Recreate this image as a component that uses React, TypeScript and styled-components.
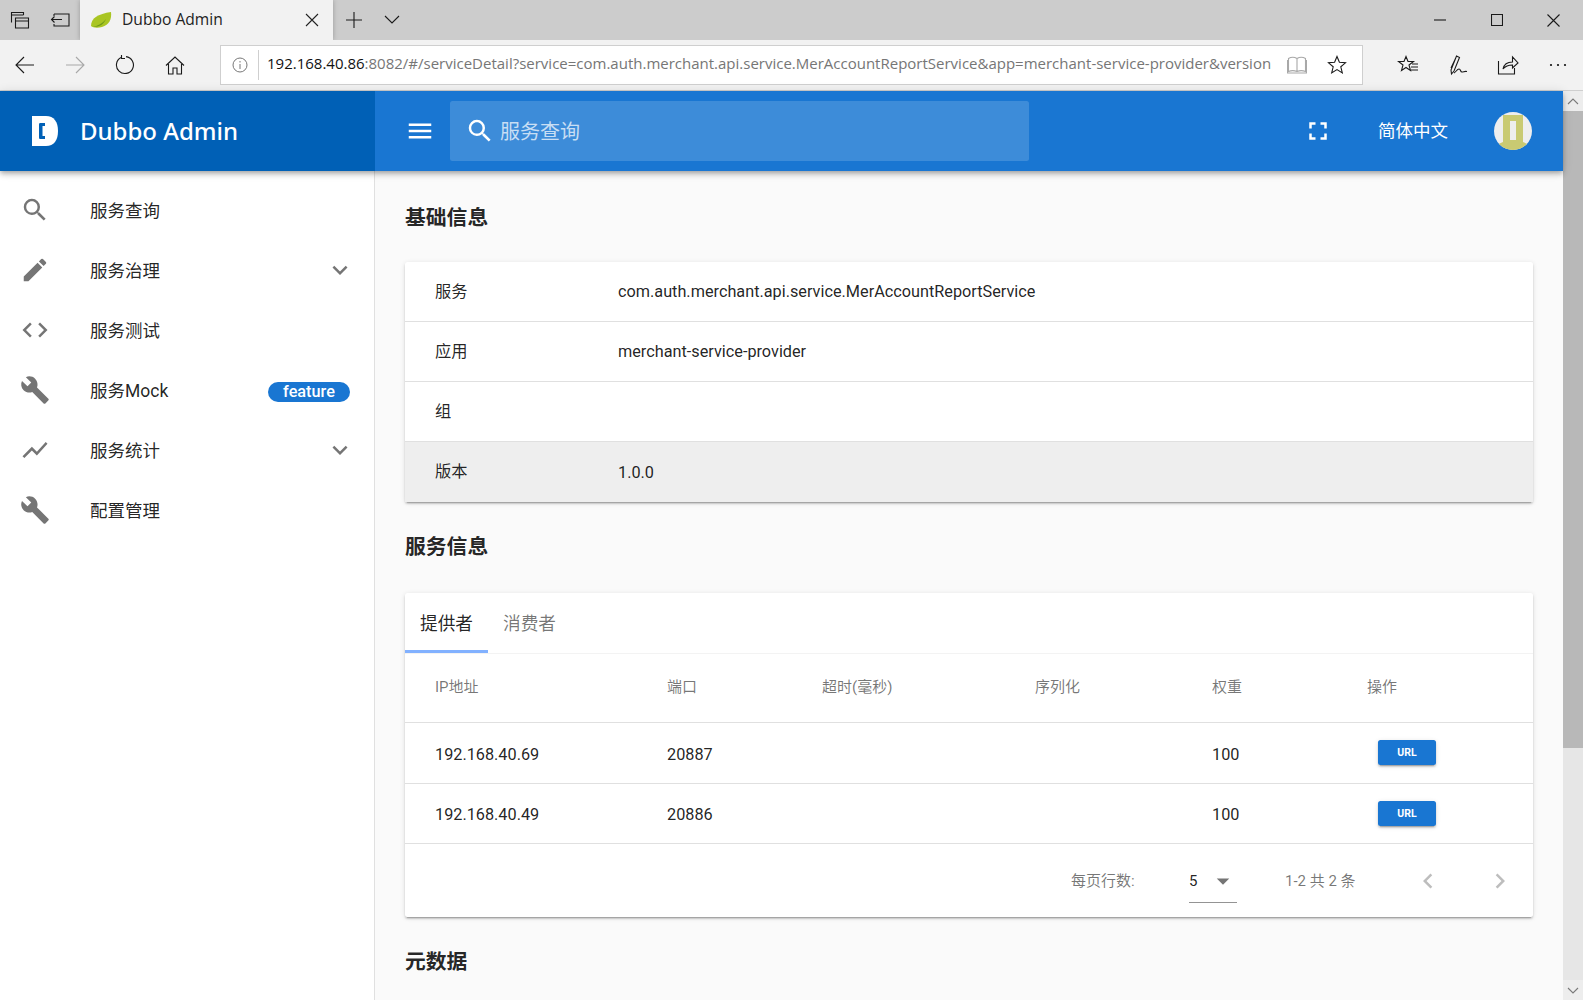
import styled, { createGlobalStyle } from 'styled-components';
import {
  MdArrowDropDown,
  MdBuild,
  MdChevronLeft,
  MdChevronRight,
  MdCode,
  MdEdit,
  MdFullscreen,
  MdKeyboardArrowDown,
  MdMenu,
  MdSearch,
  MdShowChart,
} from 'react-icons/md';

const GlobalStyle = createGlobalStyle`
  html, body {
    margin: 0;
    height: 100%;
    overflow: hidden;
  }
  body {
    font-family: Roboto, "Noto Sans CJK SC", sans-serif;
    color: rgba(0, 0, 0, 0.87);
  }
  * {
    box-sizing: border-box;
  }
`;

const Page = styled.div`
  width: 1583px;
  height: 1000px;
  display: flex;
  flex-direction: column;
  overflow: hidden;
`;

/* browser chrome */
const TabStrip = styled.div`
  height: 40px;
  flex: none;
  display: flex;
  align-items: center;
  background: #cccccc;
`;

const ChromeButton = styled.div<{ $w?: number; $muted?: boolean }>`
  width: ${(p) => p.$w ?? 40}px;
  height: 100%;
  flex: none;
  display: flex;
  align-items: center;
  justify-content: center;
  color: ${(p) => (p.$muted ? '#a8a8a8' : '#1a1a1a')};

  svg {
    fill: none;
    stroke: currentColor;
    stroke-width: 1.1;
  }
`;

const BrowserTab = styled.div`
  width: 253px;
  height: 40px;
  flex: none;
  display: flex;
  align-items: center;
  padding: 0 14px 0 10px;
  background: #f2f2f2;
  box-shadow: 0 0 5px rgba(0, 0, 0, 0.25);
  font-family: "Open Sans", sans-serif;
  font-size: 15.6px;
  color: #222;
`;

const TabTitle = styled.span`
  margin-left: 10px;
  padding-bottom: 2px;
  flex: 1;
`;

const TabTools = styled.div`
  display: flex;
  height: 100%;
  margin-left: 1px;
`;

const WindowControls = styled.div`
  display: flex;
  height: 100%;
  margin-left: auto;
  padding-right: 1px;
`;

const AddressBar = styled.div`
  height: 51px;
  flex: none;
  display: flex;
  align-items: center;
  background: #f2f2f2;
  border-bottom: 1px solid #cfcfcf;
`;

const NavButtons = styled.div`
  width: 220px;
  height: 100%;
  flex: none;
  display: flex;
`;

const UrlBox = styled.div`
  width: 1143px;
  height: 40px;
  flex: none;
  display: flex;
  align-items: center;
  padding-right: 5px;
  background: #fff;
  border: 1px solid #cfcfcf;
  font-family: "Open Sans", sans-serif;
  font-size: 15px;
`;

const UrlInfo = styled.div`
  width: 38px;
  height: 30px;
  flex: none;
  display: flex;
  align-items: center;
  justify-content: center;
  border-right: 1px solid #cfcfcf;
  color: #777;

  svg {
    fill: none;
    stroke: currentColor;
    stroke-width: 1;
  }
`;

const UrlText = styled.div`
  flex: 1;
  margin-left: 8px;
  padding-bottom: 5px;
  white-space: nowrap;
  overflow: hidden;
  color: #767676;

  b {
    font-weight: 400;
    color: #111;
  }
`;

const UrlAction = styled(ChromeButton)`
  width: 40px;
`;

const BrowserActions = styled.div`
  display: flex;
  flex: 1;
  height: 100%;
  padding-left: 20px;
`;

/* app */
const AppFrame = styled.div`
  flex: 1;
  min-height: 0;
  display: flex;
`;

const AppColumn = styled.div`
  flex: 1;
  min-width: 0;
  display: flex;
  flex-direction: column;
`;

const Toolbar = styled.header`
  position: relative;
  z-index: 2;
  height: 80px;
  flex: none;
  display: flex;
  align-items: center;
  background: #1976d2;
  color: #fff;
  box-shadow: 0 2px 4px -1px rgba(0, 0, 0, 0.2), 0 4px 5px 0 rgba(0, 0, 0, 0.14),
    0 1px 10px 0 rgba(0, 0, 0, 0.12);
`;

const Brand = styled.div`
  width: 375px;
  height: 100%;
  flex: none;
  display: flex;
  align-items: center;
  padding-left: 32px;
  background: #0060b6;
  font-family: "Noto Sans", sans-serif;
  font-size: 24px;
  font-weight: 500;
`;

const BrandName = styled.span`
  margin-left: 22px;
  padding-bottom: 1px;
`;

const MenuIcon = styled(MdMenu)`
  width: 30px;
  height: 30px;
  margin-left: 30px;
  flex: none;
`;

const SearchBox = styled.div`
  width: 579px;
  height: 60px;
  margin-left: 15px;
  display: flex;
  align-items: center;
  padding-left: 15px;
  border-radius: 2.5px;
  background: rgba(255, 255, 255, 0.16);
  font-size: 20px;
  color: rgba(255, 255, 255, 0.72);
`;

const SearchIcon = styled(MdSearch)`
  width: 30px;
  height: 30px;
  color: #fff;
  margin-right: 5px;
`;

const SearchHint = styled.span`
  padding-bottom: 2px;
`;

const FullscreenIcon = styled(MdFullscreen)`
  width: 30px;
  height: 30px;
  margin-left: 274px;
  flex: none;
`;

const Language = styled.span`
  margin-left: 45px;
  padding-bottom: 4px;
  font-size: 17.5px;
`;

const Avatar = styled.div`
  width: 38px;
  height: 38px;
  margin-left: 46px;
  flex: none;
  border-radius: 50%;
  overflow: hidden;
`;

const Body = styled.div`
  flex: 1;
  min-height: 0;
  display: flex;
`;

const Sidebar = styled.nav`
  width: 375px;
  flex: none;
  padding-top: 9px;
  background: #fff;
  border-right: 1px solid #e0e0e0;
`;

const NavItem = styled.div`
  height: 60px;
  display: flex;
  align-items: center;
  padding: 0 24px 0 20px;
  font-size: 17.5px;
  color: rgba(0, 0, 0, 0.87);

  > svg:first-child {
    width: 30px;
    height: 30px;
    flex: none;
    color: #757575;
  }
`;

const NavLabel = styled.span`
  margin-left: 40px;
  padding-bottom: 2px;
  flex: 1;
`;

const NavArrow = styled(MdKeyboardArrowDown)`
  width: 30px;
  height: 30px;
  margin-right: -5px;
  color: #757575;
`;

const Pill = styled.span`
  width: 82px;
  height: 20px;
  margin-top: 3px;
  display: flex;
  align-items: center;
  justify-content: center;
  border-radius: 10px;
  background: #1976d2;
  color: #fff;
  font-size: 16.25px;
  font-weight: 500;
`;

const Content = styled.main`
  flex: 1;
  min-width: 0;
  overflow: hidden;
  padding: 0 30px;
  background: #fafafa;
`;

const SectionTitle = styled.h2`
  margin: 30px 0 31px;
  height: 30px;
  line-height: 30px;
  font-size: 20.8px;
  font-weight: 700;
  color: rgba(0, 0, 0, 0.87);

  &:first-child {
    margin: 32px 0 29px;
  }
`;

const Card = styled.section`
  background: #fff;
  border-radius: 2.5px;
  box-shadow: 0 3px 1px -2px rgba(0, 0, 0, 0.2), 0 2px 2px 0 rgba(0, 0, 0, 0.14),
    0 1px 5px 0 rgba(0, 0, 0, 0.12);
`;

const InfoRow = styled.div<{ $active?: boolean }>`
  height: 60px;
  display: flex;
  align-items: center;
  padding-left: 30px;
  font-size: 16.25px;
  background: ${(p) => (p.$active ? '#eeeeee' : 'transparent')};
  border-top: 1px solid #e0e0e0;

  &:first-child {
    height: 59px;
    border-top: 0;
  }

  &:last-child {
    height: 61px;
  }
`;

const InfoKey = styled.span`
  width: 183px;
  flex: none;
  padding-bottom: 4px;
`;

const Tabs = styled.div`
  height: 60px;
  display: flex;
  box-shadow: 0 1px 0 #f3f3f3;
`;

const Tab = styled.div<{ $active?: boolean }>`
  width: 83px;
  display: flex;
  align-items: center;
  justify-content: center;
  font-size: 17.7px;
  color: ${(p) => (p.$active ? 'rgba(0, 0, 0, 0.87)' : 'rgba(0, 0, 0, 0.54)')};
  border-bottom: 3px solid ${(p) => (p.$active ? '#82b1ff' : 'transparent')};
`;

const GridRow = styled.div`
  display: grid;
  grid-template-columns: 232px 155px 213px 177px 155px 1fr;
  align-items: center;
  padding-left: 30px;
`;

const HeadRow = styled(GridRow)`
  height: 69px;
  padding-bottom: 5px;
  font-size: 15px;
  color: rgba(0, 0, 0, 0.54);
`;

const BodyRow = styled(GridRow)<{ $tall?: boolean }>`
  height: ${(p) => (p.$tall ? 61 : 60)}px;
  padding-top: 2px;
  border-top: 1px solid #e0e0e0;
  font-size: 16.25px;
`;

const UrlButton = styled.button`
  display: block;
  width: 58px;
  height: 25px;
  margin: 0 0 3px 11px;
  padding: 0;
  border: 0;
  border-radius: 2.5px;
  background: #1976d2;
  color: #fff;
  font-family: Roboto, sans-serif;
  font-size: 10.5px;
  font-weight: 700;
  box-shadow: 0 3px 1px -2px rgba(0, 0, 0, 0.2), 0 2px 2px 0 rgba(0, 0, 0, 0.14),
    0 1px 5px 0 rgba(0, 0, 0, 0.12);
`;

const TableFooter = styled.div`
  height: 74px;
  display: flex;
  align-items: center;
  border-top: 1px solid #e0e0e0;
  font-size: 15px;
  color: rgba(0, 0, 0, 0.54);
`;

const RowsLabel = styled.span`
  margin-left: 666px;
  width: 118px;
  flex: none;
  padding-bottom: 2px;
  word-spacing: 3px;
`;

const RowsSelect = styled.div`
  width: 48px;
  height: 36px;
  flex: none;
  display: flex;
  align-items: center;
  justify-content: space-between;
  margin-top: 8px;
  padding-bottom: 6px;
  border-bottom: 1px solid #949494;
  color: rgba(0, 0, 0, 0.87);

  svg {
    width: 30px;
    height: 30px;
    margin-right: -1px;
    color: #757575;
  }
`;

const PageCount = styled.span`
  margin-left: 48px;
  width: 73px;
  flex: none;
  padding-bottom: 2px;
`;

const PageButton = styled.div<{ $gap: number }>`
  margin-left: ${(p) => p.$gap}px;
  display: flex;
  color: #bdbdbd;

  svg {
    width: 30px;
    height: 30px;
  }
`;

const Scrollbar = styled.div`
  width: 20px;
  flex: none;
  display: flex;
  flex-direction: column;
  background: #e6e6e6;
`;

const ScrollArrow = styled.div`
  height: 20px;
  flex: none;
  display: flex;
  align-items: center;
  justify-content: center;
  background: #ededed;
  color: #7a7a7a;

  svg {
    fill: none;
    stroke: currentColor;
    stroke-width: 1.1;
  }
`;

const ScrollThumb = styled.div`
  height: 637px;
  flex: none;
  background: #b8b8b8;
`;

const ScrollRest = styled.div`
  flex: 1;
`;

function LeafIcon() {
  return (
    <svg width="22" height="18" viewBox="0 0 22 18">
      <path d="M1 15C1 7 8 3 21 1c1 7-2 13-9 15-4 1-9 1-11-1z" fill="#a9c522" />
      <path d="M3 16c4-1 9-3 13-8-2 5-6 8-13 8z" fill="#6f9a18" />
    </svg>
  );
}

function LogoMark() {
  return (
    <svg width="26" height="30" viewBox="0 0 26 30">
      <path d="M0 0h14c8 0 12 6 12 15s-4 15-12 15H0z" fill="#fff" />
      <path d="M13 7H8C7 7 7 8 7 9v12c0 1 0 2 1 2h5v-3h-2.500V10H13z" fill="#0060b6" />
    </svg>
  );
}

function AvatarArt() {
  return (
    <svg width="38" height="38" viewBox="0 0 38 38">
      <rect width="38" height="38" fill="#eeeeee" />
      <path d="M9 3h20v27l9 4v4H0v-4l9-4z" fill="#c9ca72" />
      <rect x="16" y="9" width="6" height="19" fill="#eeeeee" />
    </svg>
  );
}

export default function App() {
  return (
    <Page>
      <GlobalStyle />
      <TabStrip>
        <ChromeButton>
          <svg width="20" height="20" viewBox="0 0 20 20">
            <path d="M1.500 12.500v-10h12v2.500M1.500 5h12M5.500 8h13v10h-13zM5.500 11h13" />
          </svg>
        </ChromeButton>
        <ChromeButton>
          <svg width="20" height="20" viewBox="0 0 20 20">
            <path d="M4 4h15v12H4v-2M1 9.500h11M4.500 6.500l-3 3 3 3M4 4v2" />
          </svg>
        </ChromeButton>
        <BrowserTab>
          <LeafIcon />
          <TabTitle>Dubbo Admin</TabTitle>
          <svg width="14" height="14" viewBox="0 0 14 14" fill="none" stroke="#222" strokeWidth="1.100">
            <path d="M1 1l12 12M13 1L1 13" />
          </svg>
        </BrowserTab>
        <TabTools>
          <ChromeButton>
            <svg width="18" height="18" viewBox="0 0 18 18">
              <path d="M9 1v16M1 9h16" />
            </svg>
          </ChromeButton>
          <ChromeButton $w={36}>
            <svg width="16" height="10" viewBox="0 0 16 10">
              <path d="M1 1l7 7 7-7" />
            </svg>
          </ChromeButton>
        </TabTools>
        <WindowControls>
          <ChromeButton $w={57}>
            <svg width="12" height="2" viewBox="0 0 12 2">
              <path d="M0 1h12" />
            </svg>
          </ChromeButton>
          <ChromeButton $w={57}>
            <svg width="12" height="12" viewBox="0 0 12 12">
              <path d="M.5.500h11v11H.500z" />
            </svg>
          </ChromeButton>
          <ChromeButton $w={57}>
            <svg width="13" height="13" viewBox="0 0 13 13">
              <path d="M.5.500l12 12M12.500.500l-12 12" />
            </svg>
          </ChromeButton>
        </WindowControls>
      </TabStrip>

      <AddressBar>
        <NavButtons>
          <ChromeButton $w={50}>
            <svg width="20" height="18" viewBox="0 0 20 18">
              <path d="M19 9H1M9 1L1 9l8 8" />
            </svg>
          </ChromeButton>
          <ChromeButton $w={50} $muted>
            <svg width="20" height="18" viewBox="0 0 20 18">
              <path d="M1 9h18M11 1l8 8-8 8" />
            </svg>
          </ChromeButton>
          <ChromeButton $w={50}>
            <svg width="20" height="20" viewBox="0 0 20 20">
              <path d="M6 2.500a8.500 8.500 0 1 0 5-.9M6.500 0v3.500H10" />
            </svg>
          </ChromeButton>
          <ChromeButton $w={50}>
            <svg width="20" height="19" viewBox="0 0 20 19">
              <path d="M1 9.500L10 1l9 8.500M3.500 8v10h4.500v-6h4v6h4.500V8" />
            </svg>
          </ChromeButton>
        </NavButtons>
        <UrlBox>
          <UrlInfo>
            <svg width="16" height="16" viewBox="0 0 16 16">
              <circle cx="8" cy="8" r="7" />
              <path d="M8 7v5M8 4v1.500" />
            </svg>
          </UrlInfo>
          <UrlText>
            <b>192.168.40.86</b>
            :8082/#/serviceDetail?service=com.auth.merchant.api.service.MerAccountReportService&amp;app=merchant-service-provider&amp;version
          </UrlText>
          <UrlAction $muted>
            <svg width="20" height="18" viewBox="0 0 20 18">
              <path d="M1.500 2.500C4 1 7.500 1 10 2.500c2.500-1.500 6-1.500 8.500 0v13c-2.500-1-6-1-8.500 0-2.500-1-6-1-8.500 0zM10 2.500v13M.5 4v13h19V4" />
            </svg>
          </UrlAction>
          <UrlAction>
            <svg width="20" height="20" viewBox="0 0 20 20">
              <path d="M10 1.500l2.400 5.800 6.100.5-4.700 4 1.500 6.100L10 14.600l-5.300 3.300 1.500-6.100-4.700-4 6.100-.5z" />
            </svg>
          </UrlAction>
        </UrlBox>
        <BrowserActions>
          <ChromeButton $w={50}>
            <svg width="22" height="20" viewBox="0 0 22 20">
              <path d="M9 1.500l2 5h5.500l-4.500 3.500 1.500 5.500L9 12.500l-4.500 3 1.500-5.500L1.500 6.500H7zM15 9h6M14 12h7M14 15h7" />
            </svg>
          </ChromeButton>
          <ChromeButton $w={50}>
            <svg width="22" height="22" viewBox="0 0 22 22">
              <path d="M9.500 2l3 1.500L7 17l-2.500 3-.5-4zM8.500 4.500L4 14M7 19c2-1 3-4 5-4s1 3 3 3 2-1 5-.5" />
            </svg>
          </ChromeButton>
          <ChromeButton $w={50}>
            <svg width="22" height="20" viewBox="0 0 22 20">
              <path d="M1.500 6v13h16v-6M6 14c1-5 5-7 9.500-7V2L21 8l-5.500 5V10c-4 0-7 1-9.500 4z" />
            </svg>
          </ChromeButton>
          <ChromeButton $w={50}>
            <svg width="20" height="4" viewBox="0 0 20 4" style={{ fill: '#111', stroke: 'none' }}>
              <circle cx="3" cy="2" r="1.100" />
              <circle cx="10" cy="2" r="1.100" />
              <circle cx="17" cy="2" r="1.100" />
            </svg>
          </ChromeButton>
        </BrowserActions>
      </AddressBar>

      <AppFrame>
        <AppColumn>
          <Toolbar>
            <Brand>
              <LogoMark />
              <BrandName>Dubbo Admin</BrandName>
            </Brand>
            <MenuIcon />
            <SearchBox>
              <SearchIcon />
              <SearchHint>服务查询</SearchHint>
            </SearchBox>
            <FullscreenIcon />
            <Language>简体中文</Language>
            <Avatar>
              <AvatarArt />
            </Avatar>
          </Toolbar>
          <Body>
            <Sidebar>
              <NavItem>
                <MdSearch />
                <NavLabel>服务查询</NavLabel>
              </NavItem>
              <NavItem>
                <MdEdit />
                <NavLabel>服务治理</NavLabel>
                <NavArrow />
              </NavItem>
              <NavItem>
                <MdCode />
                <NavLabel>服务测试</NavLabel>
              </NavItem>
              <NavItem>
                <MdBuild />
                <NavLabel>服务Mock</NavLabel>
                <Pill>feature</Pill>
              </NavItem>
              <NavItem>
                <MdShowChart />
                <NavLabel>服务统计</NavLabel>
                <NavArrow />
              </NavItem>
              <NavItem>
                <MdBuild />
                <NavLabel>配置管理</NavLabel>
              </NavItem>
            </Sidebar>
            <Content>
              <SectionTitle>基础信息</SectionTitle>
              <Card>
                <InfoRow>
                  <InfoKey>服务</InfoKey>
                  com.auth.merchant.api.service.MerAccountReportService
                </InfoRow>
                <InfoRow>
                  <InfoKey>应用</InfoKey>
                  merchant-service-provider
                </InfoRow>
                <InfoRow>
                  <InfoKey>组</InfoKey>
                </InfoRow>
                <InfoRow $active>
                  <InfoKey>版本</InfoKey>
                  1.0.0
                </InfoRow>
              </Card>
              <SectionTitle>服务信息</SectionTitle>
              <Card>
                <Tabs>
                  <Tab $active>提供者</Tab>
                  <Tab>消费者</Tab>
                </Tabs>
                <HeadRow>
                  <span>IP地址</span>
                  <span>端口</span>
                  <span>超时(毫秒)</span>
                  <span>序列化</span>
                  <span>权重</span>
                  <span>操作</span>
                </HeadRow>
                <BodyRow $tall>
                  <span>192.168.40.69</span>
                  <span>20887</span>
                  <span />
                  <span />
                  <span>100</span>
                  <span>
                    <UrlButton>URL</UrlButton>
                  </span>
                </BodyRow>
                <BodyRow>
                  <span>192.168.40.49</span>
                  <span>20886</span>
                  <span />
                  <span />
                  <span>100</span>
                  <span>
                    <UrlButton>URL</UrlButton>
                  </span>
                </BodyRow>
                <TableFooter>
                  <RowsLabel>每页行数:</RowsLabel>
                  <RowsSelect>
                    5
                    <MdArrowDropDown />
                  </RowsSelect>
                  <PageCount>1-2 共 2 条</PageCount>
                  <PageButton $gap={55}>
                    <MdChevronLeft />
                  </PageButton>
                  <PageButton $gap={42}>
                    <MdChevronRight />
                  </PageButton>
                </TableFooter>
              </Card>
              <SectionTitle>元数据</SectionTitle>
            </Content>
          </Body>
        </AppColumn>
        <Scrollbar>
          <ScrollArrow>
            <svg width="12" height="7" viewBox="0 0 12 7">
              <path d="M1 6l5-5 5 5" />
            </svg>
          </ScrollArrow>
          <ScrollThumb />
          <ScrollRest />
          <ScrollArrow>
            <svg width="12" height="7" viewBox="0 0 12 7">
              <path d="M1 1l5 5 5-5" />
            </svg>
          </ScrollArrow>
        </Scrollbar>
      </AppFrame>
    </Page>
  );
}
